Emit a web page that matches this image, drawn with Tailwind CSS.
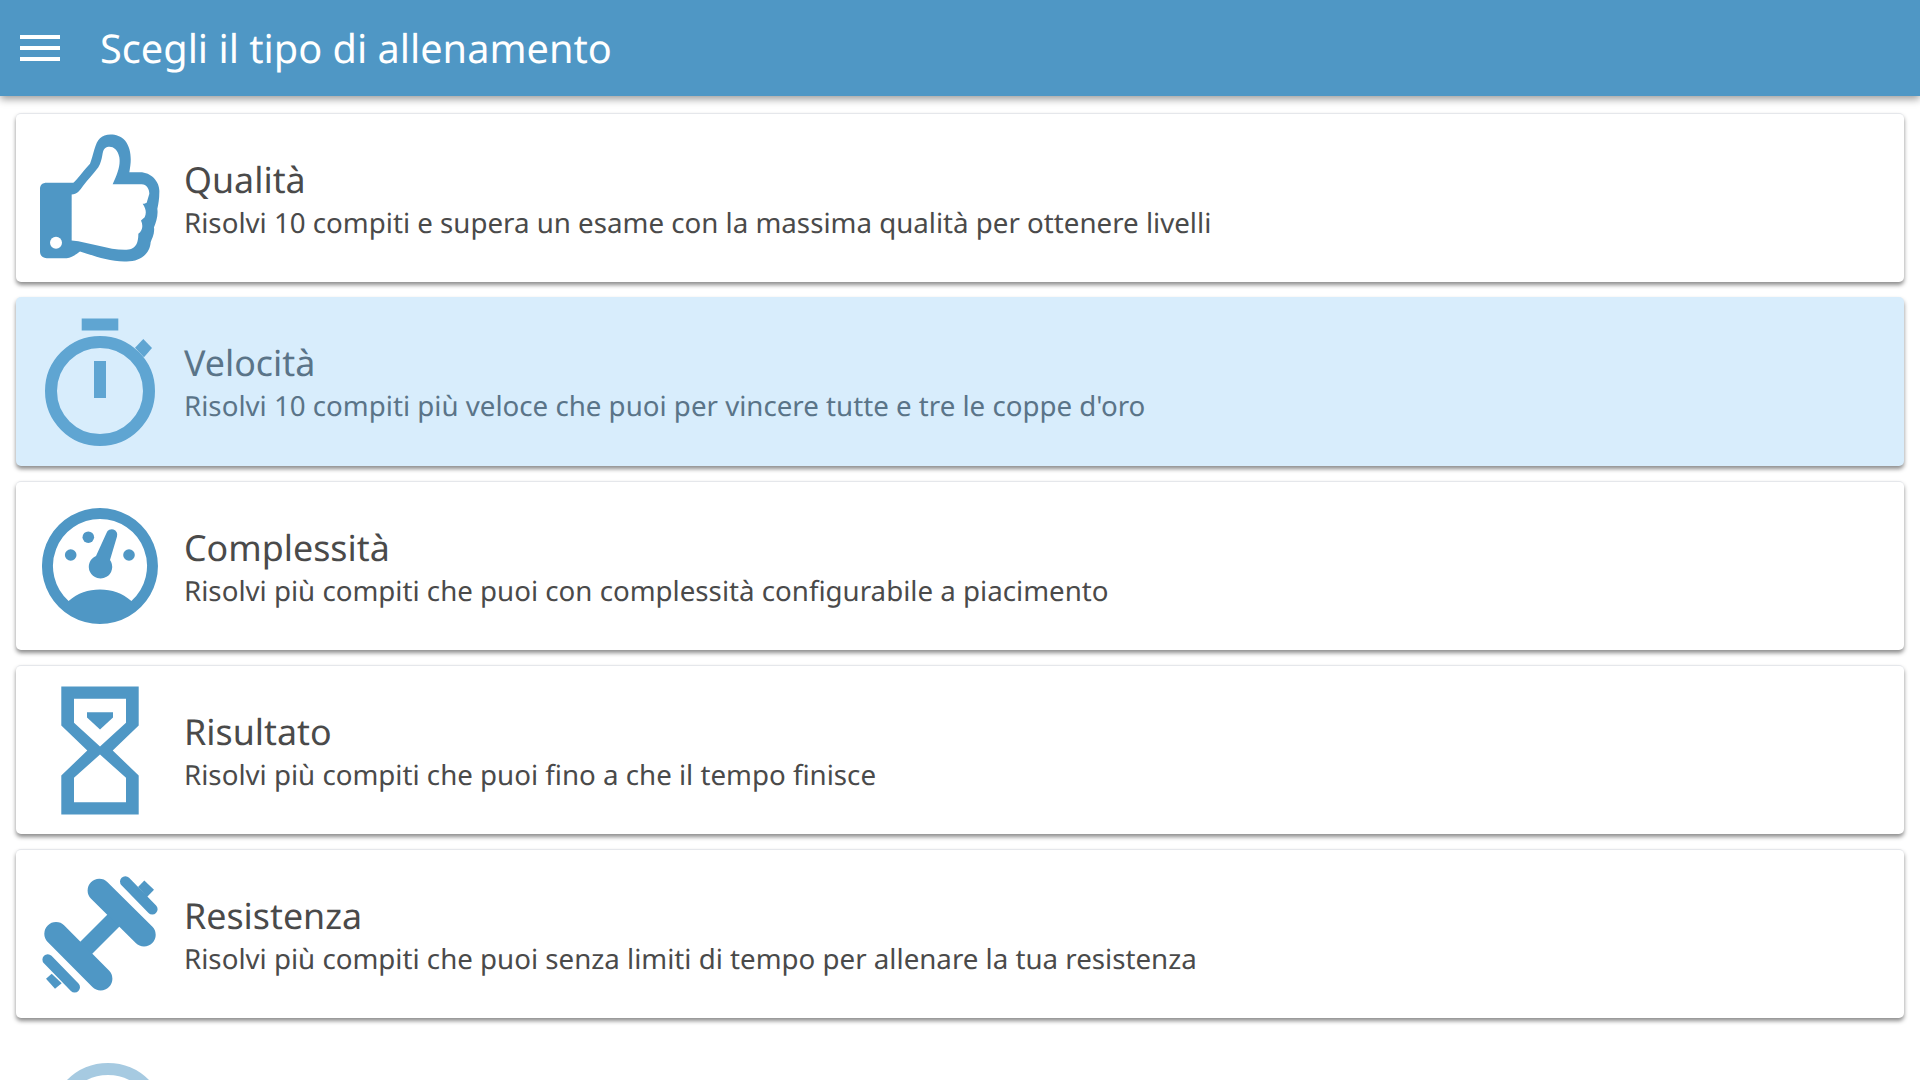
<!DOCTYPE html>
<html lang="it">
<head>
    <meta charset="UTF-8">
    <title>Scegli il tipo di allenamento</title>
    <script src="https://cdn.jsdelivr.net/npm/@tailwindcss/browser@4"></script>
</head>
<body class="bg-white h-[1080px] overflow-hidden font-['Noto_Sans',sans-serif] [text-rendering:geometricPrecision]">
    <!-- Barra superiore -->
    <header class="relative z-10 h-24 bg-[#4f97c5] flex items-center shadow-[0_3px_8px_rgba(0,0,0,0.4)]">
        <div class="w-[100px] pl-[20px] flex flex-col gap-[7px]">
            <span class="block w-[40px] h-[4px] bg-white"></span>
            <span class="block w-[40px] h-[4px] bg-white"></span>
            <span class="block w-[40px] h-[4px] bg-white"></span>
        </div>
        <h1 class="text-[39.7px] leading-none text-white pt-[2px]">Scegli il tipo di allenamento</h1>
    </header>

    <!-- Lista allenamenti -->
    <main class="px-4 pt-[17px] flex flex-col gap-[15px]">
        <div class="h-[169px] bg-white rounded-[5px] flex items-center border-t border-gray-200 shadow-[0_3px_4px_rgba(0,0,0,0.45)]">
            <div class="w-[168px] pl-[24px] shrink-0">
                <svg class="w-[120px] h-[130px]" viewBox="30 22.5 360 390" fill="#4f97c5">
                    <path fill-rule="evenodd" d="M50 172H130C140 165 165 130 180 115C190 90 195 50 210 38C225 22 265 22 285 45C305 70 305 105 298 140H330C365 140 390 170 388 200C388 220 385 235 382 250C385 270 378 290 372 305C375 325 365 340 362 350C360 385 330 408 290 408C240 410 190 390 150 378C140 385 125 398 110 398H50C38 398 30 390 30 378V190C30 178 38 172 50 172ZM125 207C140 207 150 195 160 180C175 160 190 145 205 125C220 100 215 75 225 68C240 58 262 65 268 95C272 120 262 145 248 176H335C350 176 358 190 358 205L350 232C345 235 340 235 338 235C348 250 350 262 344 275L333 285C340 300 338 315 325 325C325 345 322 372 290 373C240 375 180 350 125 345Z"/>
                    <circle cx="78" cy="352" r="18" fill="#fff"/>
                </svg>
            </div>
            <div class="flex flex-col">
                <span class="text-[35.8px] leading-[50px] text-[#4a4a4a]">Qualità</span>
                <span class="text-[27.7px] leading-[37px] text-[#4a4a4a]">Risolvi 10 compiti e supera un esame con la massima qualità per ottenere livelli</span>
            </div>
        </div>

        <div class="h-[169px] bg-[#d8edfc] rounded-[5px] flex items-center shadow-[0_3px_4px_rgba(0,0,0,0.45)]">
            <div class="w-[168px] pl-[24px] shrink-0">
                <svg class="w-[120px] h-[130px]" viewBox="0 0 120 130" fill="#5fa5d2">
                    <rect x="41.7" y="1.5" width="36.6" height="12"/>
                    <path d="M103.3 22L112 31L104 40.2L95 30.8Z"/>
                    <circle cx="60" cy="74" r="49" fill="none" stroke="#5fa5d2" stroke-width="12"/>
                    <rect x="54" y="44" width="12" height="37"/>
                </svg>
            </div>
            <div class="flex flex-col">
                <span class="text-[35.8px] leading-[50px] text-[#5a7488]">Velocità</span>
                <span class="text-[27.7px] leading-[37px] text-[#5a7488]">Risolvi 10 compiti più veloce che puoi per vincere tutte e tre le coppe d'oro</span>
            </div>
        </div>

        <div class="h-[169px] bg-white rounded-[5px] flex items-center border-t border-gray-200 shadow-[0_3px_4px_rgba(0,0,0,0.45)]">
            <div class="w-[168px] pl-[24px] shrink-0">
                <svg class="w-[120px] h-[130px]" viewBox="0 0 120 130" fill="#4f97c5">
                    <path fill-rule="evenodd" d="M60 7A58 58 0 1 1 59.9 7ZM60 18A47 47 0 0 0 28.6 100C38 92 48 88.5 60 88.5C72 88.5 82 92 91.4 100A47 47 0 0 0 60 18Z"/>
                    <circle cx="48.3" cy="36.2" r="5.8"/>
                    <circle cx="30.7" cy="54" r="5.8"/>
                    <circle cx="89" cy="54" r="5.8"/>
                    <path d="M56 55L66.5 32A5.5 5.5 0 0 1 77 35.5L70 59A11.7 11.7 0 1 1 56 55Z"/>
                </svg>
            </div>
            <div class="flex flex-col">
                <span class="text-[35.8px] leading-[50px] text-[#4a4a4a]">Complessità</span>
                <span class="text-[27.7px] leading-[37px] text-[#4a4a4a]">Risolvi più compiti che puoi con complessità configurabile a piacimento</span>
            </div>
        </div>

        <div class="h-[169px] bg-white rounded-[5px] flex items-center border-t border-gray-200 shadow-[0_3px_4px_rgba(0,0,0,0.45)]">
            <div class="w-[168px] pl-[24px] shrink-0">
                <svg class="w-[120px] h-[130px]" viewBox="0 0 120 130" fill="#4f97c5">
                    <path fill-rule="evenodd" d="M21.3 1.5H98.7V40.5L72.7 65.5L98.7 90.5V129.5H21.3V90.5L47.3 65.5L21.3 40.5ZM34 13.8V37.8L60 61.5L86 37.8V13.8ZM60 69.5L34 92.8V117.2H86V92.8Z"/>
                    <path d="M47 27.2H73V32.5L60 44.5L47 32.5Z"/>
                </svg>
            </div>
            <div class="flex flex-col">
                <span class="text-[35.8px] leading-[50px] text-[#4a4a4a]">Risultato</span>
                <span class="text-[27.7px] leading-[37px] text-[#4a4a4a]">Risolvi più compiti che puoi fino a che il tempo finisce</span>
            </div>
        </div>

        <div class="h-[169px] bg-white rounded-[5px] flex items-center border-t border-gray-200 shadow-[0_3px_4px_rgba(0,0,0,0.45)]">
            <div class="w-[168px] pl-[24px] shrink-0">
                <svg class="w-[120px] h-[130px]" viewBox="0 0 120 130" fill="#4f97c5">
                    <path d="M35 90L85 40" stroke="#4f97c5" stroke-width="17"/>
                    <path d="M59.3 21.5L104 65.8" stroke="#4f97c5" stroke-width="23.4" stroke-linecap="round"/>
                    <path d="M16 64.8L60.7 109.8" stroke="#4f97c5" stroke-width="23.4" stroke-linecap="round"/>
                    <path d="M85.3 12.5L112.3 40.2" stroke="#4f97c5" stroke-width="10.6" stroke-linecap="round"/>
                    <path d="M7.7 90.5L34.7 118.2" stroke="#4f97c5" stroke-width="10.6" stroke-linecap="round"/>
                    <path d="M98 18L104.3 11.5L114 20.8L107 28Z"/>
                    <path d="M6 109.8L11.7 104.8L21.7 114.2L15 119.8Z"/>
                </svg>
            </div>
            <div class="flex flex-col">
                <span class="text-[35.8px] leading-[50px] text-[#4a4a4a]">Resistenza</span>
                <span class="text-[27.7px] leading-[37px] text-[#4a4a4a]">Risolvi più compiti che puoi senza limiti di tempo per allenare la tua resistenza</span>
            </div>
        </div>

        <!-- Icona in parte visibile -->
        <div class="pl-[27px] pt-[23px]">
            <svg class="w-[130px] h-[130px] opacity-50" viewBox="0 0 130 130">
                <circle cx="65" cy="65" r="52" fill="none" stroke="#4f97c5" stroke-width="12"/>
            </svg>
        </div>
    </main>
</body>
</html>
